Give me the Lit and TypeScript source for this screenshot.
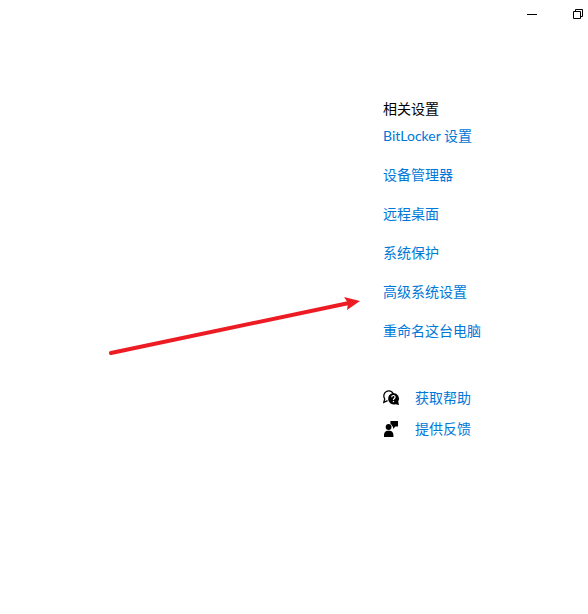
import { LitElement, html, css, svg } from "lit";
import { customElement } from "lit/decorators.js";

const RELATED = ["BitLocker 设置", "设备管理器", "远程桌面", "系统保护", "高级系统设置", "重命名这台电脑"];

const helpIcon = svg`<svg class="icon" viewBox="0 0 16 16" aria-hidden="true">
  <path d="M4.6 10.7L.8 12.3l.9-3.5A5 5 0 1 1 10.4 4" fill="none" stroke="#000" stroke-width="1.3"/>
  <path d="M10.3 2.9a5.7 5.7 0 0 1 4.9 8.6l.8 3.5-3.4-.8a5.8 5.8 0 1 1-2.3-11.3z" fill="#000"/>
  <path d="M8.7 7.2c0-2.3 3.4-2.3 3.4 0 0 1.2-1.7 1.3-1.7 2.7" fill="none" stroke="#fff" stroke-width="1.2"/>
  <path d="M9.8 10.9h1.3v1.3H9.8z" fill="#fff"/>
</svg>`;

const feedbackIcon = svg`<svg class="icon" viewBox="0 0 16 16" aria-hidden="true">
  <circle cx="5.6" cy="6" r="2.9" />
  <path d="M1 16v-2.2C1 11.6 2.6 9.8 4.6 9.8h2.2c2 0 3.6 1.8 3.6 4V16z" />
  <path d="M7.4 0H15v5.6h-2.6L10 8V5.6H9.3A3.8 3.8 0 0 0 7.4 2.8z" />
</svg>`;

@customElement("app-root")
export class AppRoot extends LitElement {
  static styles = css`
    :host {
      display: block;
      min-height: 100vh;
      background: #fff;
      color: #000;
      font: 14px/20px Lato, "Noto Sans CJK SC", sans-serif;
    }
    .titlebar {
      display: flex;
      justify-content: flex-end;
      height: 28px;
    }
    .caption {
      display: flex;
      align-items: center;
      justify-content: center;
      width: 46px;
      padding: 0;
      border: 0;
      background: none;
    }
    .restore {
      justify-content: flex-start;
      width: 33px;
      padding-left: 18px;
    }
    .glyph {
      width: 10px;
      height: 10px;
      fill: none;
      stroke: #000;
    }
    .page {
      position: relative;
      display: grid;
      grid-template-columns: 1fr 205px;
      padding-top: 71px;
    }
    .side {
      grid-column: 2;
    }
    h2 {
      margin: 0;
      font: inherit;
    }
    ul {
      margin: 0;
      padding: 0;
      list-style: none;
    }
    .related {
      display: grid;
      gap: 19px;
      padding-top: 7px;
    }
    .support {
      display: grid;
      gap: 11px;
      padding-top: 47px;
    }
    a {
      color: #0078d7;
      text-decoration: none;
    }
    .support a {
      display: flex;
      align-items: center;
      gap: 16px;
    }
    .icon {
      flex: none;
      width: 16px;
      height: 16px;
      overflow: visible;
    }
    .arrow {
      position: absolute;
      top: 266px;
      right: 226px;
      width: 254px;
      height: 62px;
      pointer-events: none;
    }
  `;

  render() {
    return html`
      <header class="titlebar">
        <button class="caption" aria-label="最小化">
          <svg class="glyph" viewBox="0 0 10 10"><path d="M0 5.5h10" /></svg>
        </button>
        <button class="caption restore" aria-label="还原">
          <svg class="glyph" viewBox="0 0 10 10"><path d="M.5 2.5h7v7h-7zM2.5 2.5v-2h7v7h-2" /></svg>
        </button>
      </header>
      <main class="page">
        <aside class="side">
          <h2>相关设置</h2>
          <ul class="related">
            ${RELATED.map((label) => html`<li><a href="#">${label}</a></li>`)}
          </ul>
          <ul class="support">
            <li><a href="#">${helpIcon}<span>获取帮助</span></a></li>
            <li><a href="#">${feedbackIcon}<span>提供反馈</span></a></li>
          </ul>
        </aside>
        <svg class="arrow" viewBox="0 0 254 62" aria-hidden="true">
          <path d="M3 59L241 9" fill="none" stroke="#ed1c24" stroke-width="4" stroke-linecap="round" />
          <path d="M252 7L236 3l4 6-1 7z" fill="#ed1c24" />
        </svg>
      </main>
    `;
  }
}
